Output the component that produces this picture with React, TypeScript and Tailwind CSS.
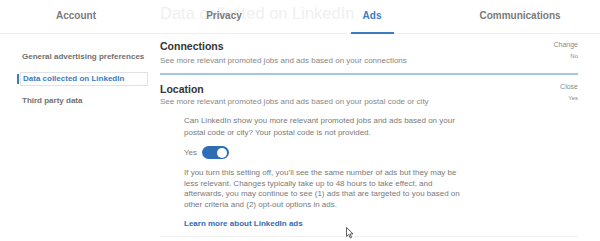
import React from "react";

const tabs = ["Account", "Privacy", "Ads", "Communications"];

function Toggle() {
  return (
    <span className="relative inline-flex h-[13px] w-[27px] items-center rounded-full bg-[#2f6db5]">
      <span className="absolute right-[2px] h-[10px] w-[10px] rounded-full bg-white" />
    </span>
  );
}

function Cursor() {
  return (
    <svg width="8" height="12" viewBox="0 0 8 12" className="absolute left-[346px] top-[227px]">
      <path d="M0.5 0.5 L0.5 9.5 L2.7 7.4 L4.3 11 L5.6 10.4 L4.1 6.9 L7 6.9 Z" fill="white" stroke="#333" strokeWidth="0.8" />
    </svg>
  );
}

export default function App() {
  return (
    <div className="relative h-[241px] w-[600px] overflow-hidden bg-white font-['Liberation_Sans',Arial,sans-serif]">
      {/* faded page title peeking behind the tabs */}
      <div className="absolute left-[160px] top-[1px] text-[16.5px] text-[#f0f0f0]">Data collected on LinkedIn</div>

      <nav className="relative grid h-[34px] grid-cols-[148px_148px_148px_148px] border-b border-[#eef0f2] pl-[2px]">
        {tabs.map((t) => (
          <div key={t} className="flex justify-center">
            <span
              className={
                t === "Ads"
                  ? "relative flex h-full w-[43px] justify-center pt-[8px] text-[10px] font-bold text-[#3b7cc4] after:absolute after:bottom-[-1px] after:left-0 after:h-[2px] after:w-full after:bg-[#3b7cc4]"
                  : "pt-[8px] text-[10px] font-bold text-[#7a7a7a]"
              }
            >
              {t}
            </span>
          </div>
        ))}
      </nav>

      <div className="flex">
        <aside className="flex w-[160px] flex-col pl-[17px] pt-[17px] text-[8px] font-bold">
          <div className="pl-[5px] text-[#707070]">General advertising preferences</div>
          <div className="mt-[9px] flex h-[14px] w-[131px] items-center">
            <span className="h-[10px] w-[2px] bg-[#3b7cc4]" />
            <span className="ml-[1px] flex h-full flex-1 items-center border border-[#dfe3e8] pl-[2px] text-[#3b7cc4]">
              Data collected on LinkedIn
            </span>
          </div>
          <div className="mt-[9px] pl-[5px] text-[#707070]">Third party data</div>
        </aside>

        <main className="w-[418px] pt-[5px]">
          <section className="flex justify-between border-b-2 border-[#a3c6e6] pb-[6px]">
            <div>
              <h2 className="text-[10.5px] font-bold leading-[14px] text-[#333]">Connections</h2>
              <p className="mt-[2px] text-[8px] leading-[12px] text-[#888]">
                See more relevant promoted jobs and ads based on your connections
              </p>
            </div>
            <div className="flex flex-col items-end pt-[1px] text-[#8a8a8a]">
              <span className="text-[7px] leading-[10px]">Change</span>
              <span className="mt-[2px] text-[6px] leading-[8px]">No</span>
            </div>
          </section>

          <section className="border-b border-[#f0f0f0] pb-[6px] pt-[7px]">
            <div className="flex justify-between">
              <div>
                <h2 className="text-[10.5px] font-bold leading-[14px] text-[#333]">Location</h2>
                <p className="text-[8px] leading-[12px] text-[#888]">
                  See more relevant promoted jobs and ads based on your postal code or city
                </p>
              </div>
              <div className="flex flex-col items-end text-[#8a8a8a]">
                <span className="text-[7px] leading-[10px]">Close</span>
                <span className="mt-[2px] text-[6px] leading-[8px]">Yes</span>
              </div>
            </div>

            <div className="ml-[24px] mt-[7px] w-[276px] text-[8px] text-[#7a7a7a]">
              <p className="leading-[11.5px]">
                Can LinkedIn show you more relevant promoted jobs and ads based on your postal code or city? Your postal code is not provided.
              </p>
              <div className="mt-[8px] flex items-center gap-[5px]">
                <span>Yes</span>
                <Toggle />
              </div>
              <p className="mt-[9px] leading-[10.6px]">
                If you turn this setting off, you’ll see the same number of ads but they may be less relevant. Changes typically take up to 48 hours to take effect, and afterwards, you may continue to see (1) ads that are targeted to you based on other criteria and (2) opt-out options in ads.
              </p>
              <a className="mt-[8px] block font-bold text-[#2f6db5]">Learn more about LinkedIn ads</a>
            </div>
          </section>
        </main>
      </div>
      <Cursor />
    </div>
  );
}
